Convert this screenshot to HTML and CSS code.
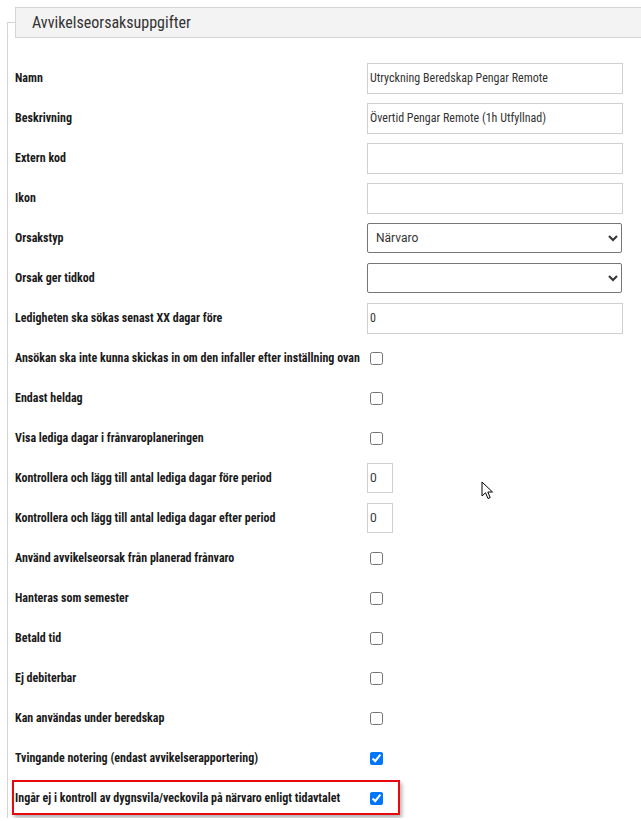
FILE: index.html
```html
<!DOCTYPE html>
<html lang="sv">
<head>
<meta charset="utf-8">
<title>Avvikelseorsaksuppgifter</title>
<link rel="stylesheet" href="styles.css">
</head>
<body>
<fieldset class="panel">
  <legend class="panel-title">Avvikelseorsaksuppgifter</legend>
  <div class="rows">
    <div class="row"><label class="lbl">Namn</label><input class="txt" type="text" value="Utryckning Beredskap Pengar Remote"></div>
    <div class="row"><label class="lbl">Beskrivning</label><input class="txt" type="text" value="Övertid Pengar Remote (1h Utfyllnad)"></div>
    <div class="row"><label class="lbl">Extern kod</label><input class="txt" type="text" value=""></div>
    <div class="row"><label class="lbl">Ikon</label><input class="txt" type="text" value=""></div>
    <div class="row"><label class="lbl">Orsakstyp</label><select class="sel"><option>Närvaro</option></select></div>
    <div class="row"><label class="lbl">Orsak ger tidkod</label><select class="sel"><option></option></select></div>
    <div class="row"><label class="lbl">Ledigheten ska sökas senast XX dagar före</label><input class="txt" type="text" value="0"></div>
    <div class="row"><label class="lbl">Ansökan ska inte kunna skickas in om den infaller efter inställning ovan</label><input class="chk" type="checkbox"></div>
    <div class="row"><label class="lbl">Endast heldag</label><input class="chk" type="checkbox"></div>
    <div class="row"><label class="lbl">Visa lediga dagar i frånvaroplaneringen</label><input class="chk" type="checkbox"></div>
    <div class="row"><label class="lbl">Kontrollera och lägg till antal lediga dagar före period</label><input class="num" type="text" value="0"></div>
    <div class="row"><label class="lbl">Kontrollera och lägg till antal lediga dagar efter period</label><input class="num" type="text" value="0"></div>
    <div class="row"><label class="lbl">Använd avvikelseorsak från planerad frånvaro</label><input class="chk" type="checkbox"></div>
    <div class="row"><label class="lbl">Hanteras som semester</label><input class="chk" type="checkbox"></div>
    <div class="row"><label class="lbl">Betald tid</label><input class="chk" type="checkbox"></div>
    <div class="row"><label class="lbl">Ej debiterbar</label><input class="chk" type="checkbox"></div>
    <div class="row"><label class="lbl">Kan användas under beredskap</label><input class="chk" type="checkbox"></div>
    <div class="row"><label class="lbl">Tvingande notering (endast avvikelserapportering)</label><input class="chk" type="checkbox" checked></div>
    <div class="row highlight"><label class="lbl">Ingår ej i kontroll av dygnsvila/veckovila på närvaro enligt tidavtalet</label><input class="chk" type="checkbox" checked></div>
  </div>
</fieldset>
<svg class="cursor" width="14" height="20" viewBox="0 0 14 20" aria-hidden="true">
  <path d="M1 1 L1 15 L4.5 11.8 L7 17.5 L9.2 16.6 L6.8 11 L11.5 11 Z" fill="#fff" stroke="#000" stroke-width="1" stroke-linejoin="miter"/>
</svg>
</body>
</html>
```

FILE: styles.css
```css
html, body {
  margin: 0;
  padding: 0;
  background: #fff;
}
body {
  font-family: Roboto, "Liberation Sans", sans-serif;
  font-stretch: 75%;
  color: #222;
  padding: 7px 0 0 7px;
  position: relative;
}
.panel {
  margin: 0;
  padding: 0 0 0 7px;
  border: none;
  border-left: 1px solid #d4d4d4;
  border-top: 1px solid #d4d4d4;
  position: relative;
  min-width: 0;
}
.panel-title {
  box-sizing: border-box;
  width: 650px;
  height: 31px;
  margin-left: 0;
  padding: 0 0 0 16px;
  background: #f3f3f3;
  border: 1px solid #d4d4d4;
  font-size: 16px;
  line-height: 29px;
  color: #333;
  font-stretch: 75%;
}
.rows {
  display: flex;
  flex-direction: column;
  padding-top: 20px;
}
.row {
  display: flex;
  align-items: center;
  height: 40px;
  position: relative;
}
.lbl {
  width: 352px;
  flex: none;
  font-size: 12px;
  font-weight: 700;
  color: #1a1a1a;
  font-stretch: 75%;
}
.txt {
  box-sizing: border-box;
  width: 256px;
  height: 31px;
  margin: 0;
  padding: 0 2px;
  border: 1px solid #cfcfcf;
  border-radius: 0;
  font-family: inherit;
  font-size: 12px;
  font-stretch: 75%;
  color: #333;
  outline: none;
}
.num {
  box-sizing: border-box;
  width: 26px;
  height: 30px;
  margin: 0;
  padding: 0 2px;
  border: 1px solid #cfcfcf;
  font-family: inherit;
  font-size: 12px;
  color: #333;
}
.sel {
  box-sizing: border-box;
  width: 255px;
  height: 30px;
  margin: 0;
  padding: 0 2px 0 4px;
  border: 1px solid #767676;
  border-radius: 2px;
  background: #fff;
  font-family: inherit;
  font-size: 12px;
  color: #333;
}
.chk {
  width: 13px;
  height: 13px;
  margin: 3px 3px 3px 3px;
}
.highlight::after {
  content: "";
  position: absolute;
  left: -3px;
  top: 2px;
  width: 384px;
  height: 31px;
  border: 2px solid #e8080f;
  box-shadow: 2px 3px 4px rgba(0,0,0,0.3);
  pointer-events: none;
}
.cursor {
  position: absolute;
  left: 481px;
  top: 481px;
}
```
